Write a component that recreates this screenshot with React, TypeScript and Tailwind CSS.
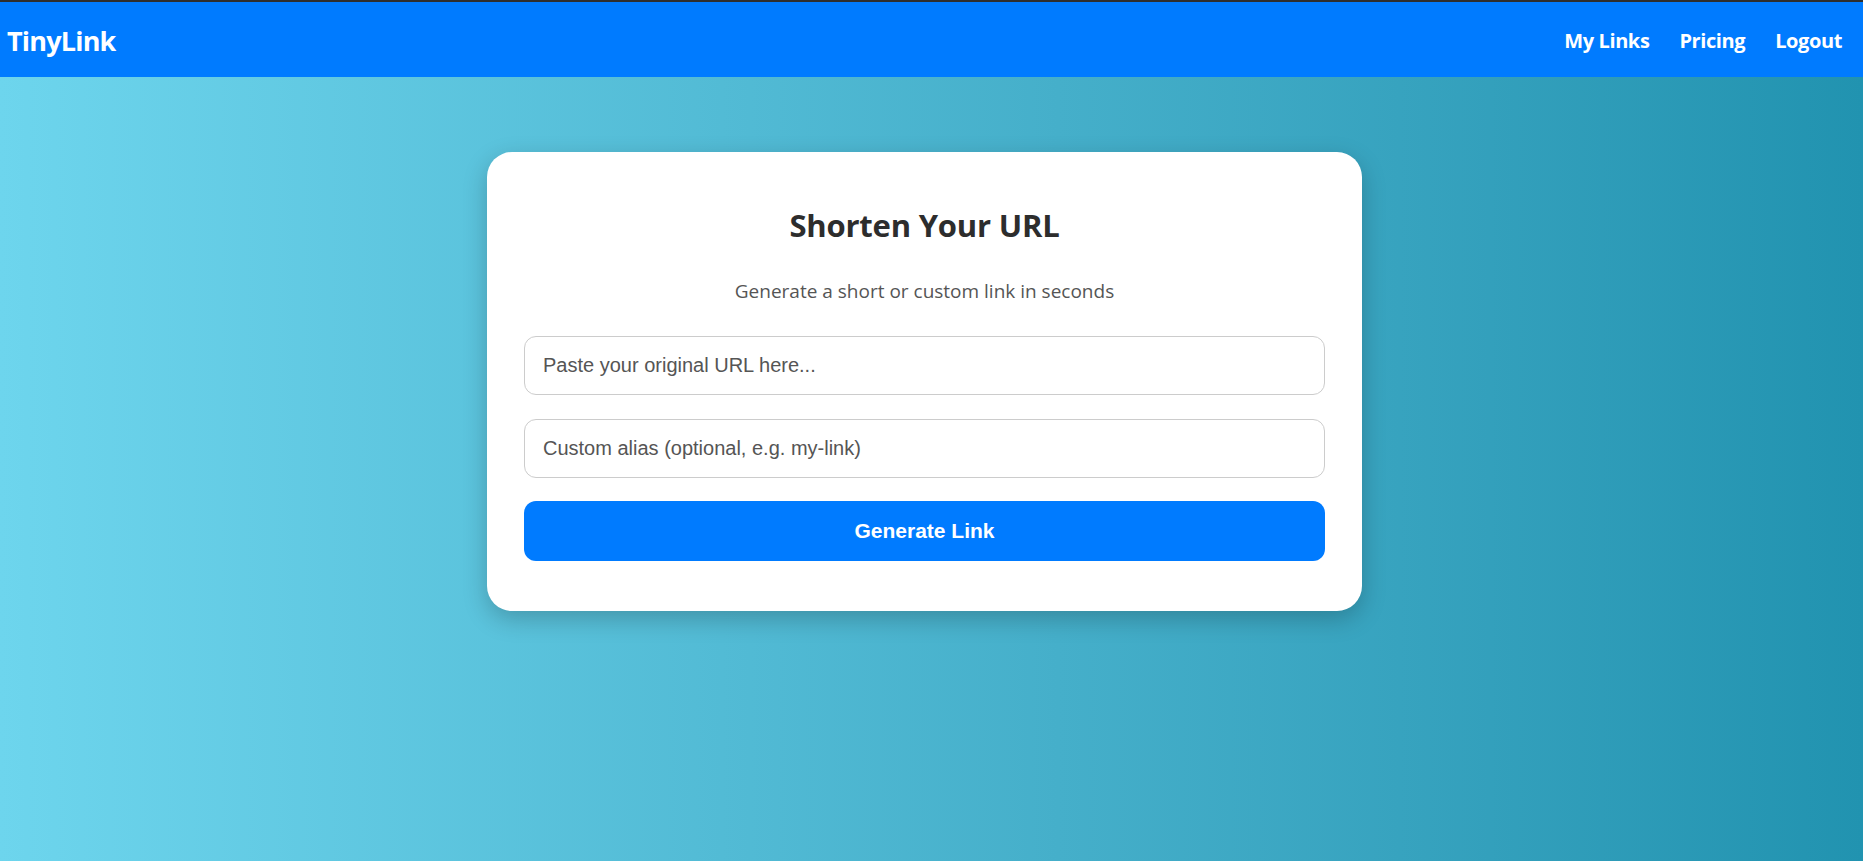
import React from 'react'

const NAV_LINKS = ['My Links', 'Pricing', 'Logout']

function Navbar() {
  return (
    <nav className="flex h-[77px] items-center justify-between border-t-2 border-[#2e2e2e] bg-[#007bff] pl-[7px] pr-[21px] pt-[3px] font-['Open_Sans',sans-serif] text-white">
      <span className="text-[27px] font-bold tracking-[-0.8px]">TinyLink</span>
      <div className="flex items-center gap-[30px]">
        {NAV_LINKS.map((l) => (
          <a key={l} href="#" className="text-[20px] font-bold tracking-[-0.4px]">
            {l}
          </a>
        ))}
      </div>
    </nav>
  )
}

export default function App() {
  return (
    <div className="min-h-[861px] bg-linear-to-r from-[#6dd5ed] to-[#2193b0]">
      <Navbar />
      <main className="flex justify-center pr-[14px] pt-[75px]">
        <div className="w-[875px] rounded-[25px] bg-white px-[37px] pb-[50px] pt-[53px] shadow-[0_8px_24px_rgba(0,0,0,0.22)]">
          <h2 className="text-center font-['Open_Sans',sans-serif] text-[31px] font-bold leading-[40px] tracking-[-0.2px] text-[#2d2d2d]">
            Shorten Your URL
          </h2>
          <p className="mt-[32px] text-center font-['Open_Sans',sans-serif] text-[19px] leading-[28px] text-[#555]">
            Generate a short or custom link in seconds
          </p>
          <div className="mt-[31px] flex flex-col gap-[24px] font-['Liberation_Sans',Arial,sans-serif]">
            <input
              type="text"
              placeholder="Paste your original URL here..."
              className="h-[59px] w-full rounded-[12px] border border-[#cccccc] px-[18px] text-[20px] text-[#333] outline-none placeholder:text-[#555]"
            />
            <input
              type="text"
              placeholder="Custom alias (optional, e.g. my-link)"
              className="h-[59px] w-full rounded-[12px] border border-[#cccccc] px-[18px] text-[20px] text-[#333] outline-none placeholder:text-[#555]"
            />
          </div>
          <button className="mt-[23px] h-[60px] w-full rounded-[12px] bg-[#007bff] font-['Liberation_Sans',Arial,sans-serif] text-[21px] font-bold text-white">
            Generate Link
          </button>
        </div>
      </main>
    </div>
  )
}
